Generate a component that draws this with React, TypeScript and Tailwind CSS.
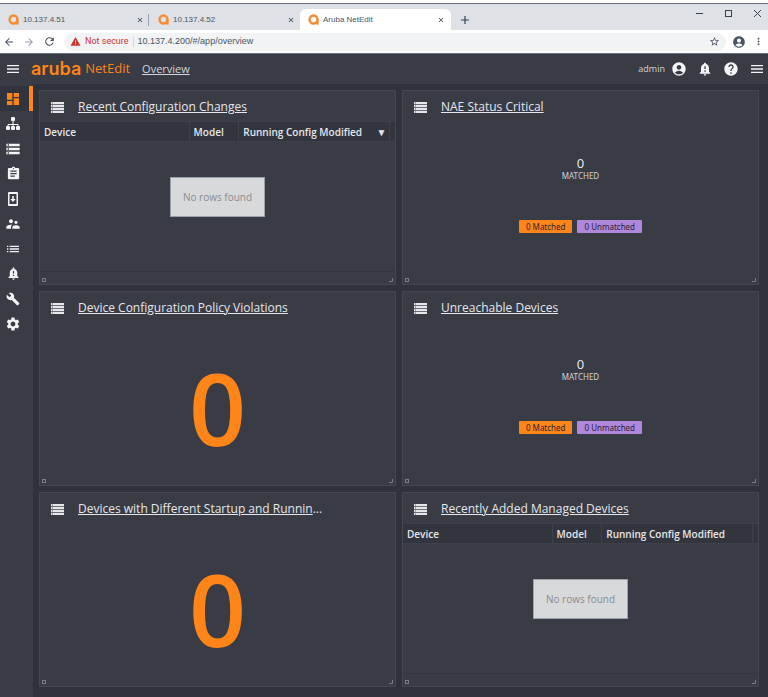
import { useState } from 'react';
import type { ReactNode } from 'react';
import {
  MdAccountCircle,
  MdArrowBack,
  MdArrowForward,
  MdAssignment,
  MdBuild,
  MdClose,
  MdDashboard,
  MdHelp,
  MdList,
  MdMenu,
  MdMoreVert,
  MdNotificationImportant,
  MdRefresh,
  MdSettings,
  MdStarBorder,
  MdStorage,
  MdSupervisorAccount,
  MdWarning,
} from 'react-icons/md';

const browserTabs = [
  { title: '10.137.4.51', active: false },
  { title: '10.137.4.52', active: false },
  { title: 'Aruba NetEdit', active: true },
];

const SitemapIcon = () => (
  <svg viewBox="0 0 14 14" className="size-[14px]" fill="currentColor">
    <path d="M7 4v3M2 10V7.5h10V10M7 7v3" fill="none" stroke="currentColor" />
    <rect x="5" y="0" width="4" height="4" rx="1" />
    <rect x="0" y="9" width="4" height="4" rx="1" />
    <rect x="5" y="9" width="4" height="4" rx="1" />
    <rect x="10" y="9" width="4" height="4" rx="1" />
  </svg>
);

// phone with a download arrow on the screen
const FirmwareIcon = () => (
  <svg viewBox="0 0 10 14" className="h-[14px] w-[10px]" fill="currentColor">
    <path fillRule="evenodd" d="M1 0h8a1 1 0 0 1 1 1v12a1 1 0 0 1-1 1H1a1 1 0 0 1-1-1V1a1 1 0 0 1 1-1zm.5 2v10h7V2z" />
    <path d="M4.2 4h1.6v3h1.9L5 9.9 2.3 7h1.9z" />
  </svg>
);

// stack of four slots, each with a status light
const StackIcon = () => (
  <svg viewBox="0 0 13 11" className="h-[11px] w-[13px] text-gray-200" fill="currentColor">
    {[0, 3, 6, 9].map((y) => (
      <g key={y}>
        <rect x="0" y={y} width="13" height="2.3" />
        <rect x="1" y={y + 0.5} width="1" height="1" fill="#5a5c65" />
      </g>
    ))}
  </svg>
);

const navItems = [
  { label: 'Overview', icon: <MdDashboard size={16} /> },
  { label: 'Topology', icon: <SitemapIcon /> },
  { label: 'Devices', icon: <MdStorage size={16} /> },
  { label: 'Plans', icon: <MdAssignment size={15} /> },
  { label: 'Firmware', icon: <FirmwareIcon /> },
  { label: 'Users', icon: <MdSupervisorAccount size={16} /> },
  { label: 'Logs', icon: <MdList size={16} /> },
  { label: 'Alerts', icon: <MdNotificationImportant size={15} /> },
  { label: 'Tools', icon: <MdBuild size={14} /> },
  { label: 'Settings', icon: <MdSettings size={16} /> },
];

const Favicon = () => (
  <svg viewBox="0 0 12 12" className="size-[11px] shrink-0" fill="none" stroke="#f68b33" strokeWidth="2.6">
    <circle cx="6" cy="6" r="4.3" />
    <path d="M10.3 6v5.6" />
  </svg>
);

const BrowserChrome = () => {
  const [url, setUrl] = useState('10.137.4.200/#/app/overview');

  return (
    <div className="border-b border-gray-500 bg-white pt-[3px] font-['Roboto'] text-gray-600">
      <div className="flex h-[27px] border-t border-gray-500 bg-[#dee1e6]">
        {browserTabs.map((tab, i) => (
          <div
            key={tab.title}
            className={
              tab.active
                ? 'mt-[5px] flex w-[151px] items-center rounded-t-md bg-white pr-[6px] pl-2'
                : 'mt-[5px] flex w-[150px] items-center pr-[5px] pl-2'
            }
          >
            <Favicon />
            <span className="ml-1 flex-1 truncate font-['Liberation_Sans'] text-[8px]">{tab.title}</span>
            <button aria-label="Close tab" className={i === 0 ? '-mr-1 flex h-3 items-center border-r border-gray-400 pr-1' : ''}>
              <MdClose size={8} className="text-gray-700" />
            </button>
          </div>
        ))}
        <button aria-label="New tab" className="mt-[5px] px-[10px] text-gray-700">
          <svg viewBox="0 0 8 8" className="size-2" stroke="currentColor" strokeWidth="1.2">
            <path d="M4 0v8M0 4h8" />
          </svg>
        </button>
        <div className="ml-auto flex h-[18px] items-center gap-[22px] pr-[7px] text-gray-700">
          <button aria-label="Minimize">
            <svg viewBox="0 0 7 7" className="size-[7px]" stroke="currentColor">
              <path d="M0 3.5h7" />
            </svg>
          </button>
          <button aria-label="Maximize">
            <svg viewBox="0 0 7 7" className="size-[7px]" stroke="currentColor" fill="none">
              <rect x="0.5" y="0.5" width="6" height="6" />
            </svg>
          </button>
          <button aria-label="Close">
            <svg viewBox="0 0 7 7" className="size-[7px]" stroke="currentColor">
              <path d="M0 0l7 7M7 0L0 7" />
            </svg>
          </button>
        </div>
      </div>
      <div className="flex h-[23px] items-center">
        <button aria-label="Back" className="ml-[3px]"><MdArrowBack size={12} /></button>
        <button aria-label="Forward" className="ml-2 text-gray-400"><MdArrowForward size={12} /></button>
        <button aria-label="Reload" className="mx-2"><MdRefresh size={13} /></button>
        <div className="flex h-[18px] flex-1 items-center rounded-full bg-[#f1f3f4] px-[6px]">
          <MdWarning size={11} className="text-[#d0342c]" />
          <label htmlFor="url" className="ml-1 text-[9px] text-[#d0342c]">Not secure</label>
          <span className="mx-1 h-[10px] border-r border-gray-300" />
          <input
            id="url"
            value={url}
            onChange={(e) => setUrl(e.target.value)}
            className="min-w-0 flex-1 bg-transparent font-['Liberation_Sans'] text-[9px] text-gray-600 outline-none"
          />
          <button aria-label="Bookmark"><MdStarBorder size={11} /></button>
        </div>
        <button aria-label="Profile" className="ml-[6px]"><MdAccountCircle size={14} /></button>
        <button aria-label="Menu" className="ml-[7px] mr-1"><MdMoreVert size={11} /></button>
      </div>
    </div>
  );
};

const AppHeader = () => (
  <header className="flex h-[30px] items-center bg-[#393b45] pr-[3px] pl-[5px] text-gray-100">
    <button aria-label="Toggle navigation"><MdMenu size={16} /></button>
    <span className="ml-[10px] font-['Inter'] text-[18px] leading-5 font-semibold text-[#ff8519]">aruba</span>
    <span className="ml-1 text-[13px] text-[#ff8519]">NetEdit</span>
    <a href="#overview" className="ml-3 text-[11px] text-gray-300 underline">Overview</a>
    <span className="ml-auto text-[9px] text-gray-300">admin</span>
    <div className="ml-[6px] flex items-center gap-[10px]">
      <button aria-label="Account"><MdAccountCircle size={16} /></button>
      <button aria-label="Notifications"><MdNotificationImportant size={16} /></button>
      <button aria-label="Help"><MdHelp size={16} /></button>
      <button aria-label="Menu"><MdMenu size={16} /></button>
    </div>
  </header>
);

const Sidebar = () => (
  <nav className="w-[33px] shrink-0 bg-[#393b45] pt-[2px]">
    {navItems.map((item, i) => (
      <a
        key={item.label}
        href={`#${item.label.toLowerCase()}`}
        aria-label={item.label}
        className={
          i === 0
            ? 'flex h-[25px] items-center border-r-4 border-[#ff8519] bg-[#32343d] pl-[5px] text-[#ff8519]'
            : 'flex h-[25px] items-center pl-[5px] text-gray-100'
        }
      >
        <span className="flex w-4 justify-center">{item.icon}</span>
      </a>
    ))}
  </nav>
);

const Panel = ({ title, clipped, children }: { title: string; clipped?: boolean; children: ReactNode }) => (
  <section className="flex min-w-0 flex-col border border-[#454750] bg-[#393b45]">
    <div className="flex h-[30px] items-center pt-[2px] pl-[11px]">
      <StackIcon />
      <h2 className="ml-[14px] text-[12px] text-gray-200">
        <a href="#panel" className="underline">{title}</a>
        {clipped && '...'}
      </h2>
    </div>
    <div className="relative flex flex-1 flex-col">{children}</div>
    <div className="flex h-3 items-end justify-between px-[2px] pb-[2px]">
      <svg viewBox="0 0 4 4" className="size-1" fill="none" stroke="#7b7d85">
        <rect x="0.5" y="0.5" width="3" height="3" />
      </svg>
      <svg viewBox="0 0 4 4" className="size-1" fill="none" stroke="#7b7d85">
        <path d="M3.5 0v3.5H0" />
      </svg>
    </div>
  </section>
);

const DeviceTable = ({ sorted }: { sorted?: boolean }) => (
  <>
    <table className="w-full table-fixed bg-[#33353e] text-left text-[10px] leading-4 whitespace-nowrap text-gray-200">
      <thead>
        <tr className="h-5 border-y border-[#3f414a]">
          <th className="w-[42%] border-r border-[#3f414a] pl-1 font-semibold">Device</th>
          <th className="w-[14%] border-r border-[#3f414a] pl-1 font-semibold">Model</th>
          <th className="border-r border-[#3f414a] pr-[2px] pl-1 font-semibold">
            <div className="flex items-center justify-between">
              <span>Running Config Modified</span>
              {sorted && <span>▼</span>}
            </div>
          </th>
          <th className="w-[6px]" aria-hidden="true" />
        </tr>
      </thead>
    </table>
    <div className="flex-1" />
    <div className="border-b border-[#34363f]" />
    <div className="absolute inset-0 flex items-center justify-center">
      <p className="border border-gray-400 bg-[#d8d9db] px-3 py-[11px] text-[10px] leading-4 text-[#8a8b8f]">No rows found</p>
    </div>
  </>
);

const MatchStatus = () => (
  <div className="flex flex-col items-center pt-[34px] font-['Noto_Sans'] text-gray-300">
    <span className="text-[13px] leading-4 text-gray-200">0</span>
    <span className="text-[8px] leading-[10px]">MATCHED</span>
    <div className="mt-[39px] flex gap-[5px] text-[8px] leading-[13px] text-[#2c2333]">
      <span className="rounded-[1px] bg-[#ff8519] px-[7px]">0 Matched</span>
      <span className="rounded-[1px] bg-[#af87dc] px-[7px]">0 Unmatched</span>
    </div>
  </div>
);

const BigCount = () => (
  <div className="flex flex-1 items-center justify-center pt-[18px] text-[100px] leading-none font-semibold text-[#ff8519]">0</div>
);

export default function App() {
  return (
    <div className="flex min-h-screen flex-col bg-[#30323b] font-['Open_Sans','Noto_Sans',sans-serif]">
      <BrowserChrome />
      <AppHeader />
      <div className="flex flex-1">
        <Sidebar />
        <main className="grid flex-1 auto-rows-fr grid-cols-2 gap-[6px] pt-[6px] pr-[9px] pb-[10px] pl-[6px]">
          <Panel title="Recent Configuration Changes"><DeviceTable sorted /></Panel>
          <Panel title="NAE Status Critical"><MatchStatus /></Panel>
          <Panel title="Device Configuration Policy Violations"><BigCount /></Panel>
          <Panel title="Unreachable Devices"><MatchStatus /></Panel>
          <Panel title="Devices with Different Startup and Runnin" clipped><BigCount /></Panel>
          <Panel title="Recently Added Managed Devices"><DeviceTable /></Panel>
        </main>
      </div>
    </div>
  );
}
